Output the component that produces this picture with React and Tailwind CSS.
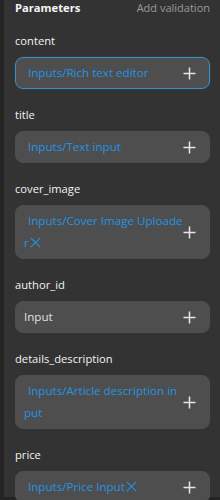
import React from "react";

const Plus = () => (
  <svg width="13" height="13" viewBox="0 0 13 13" className="shrink-0">
    <path d="M6.5 0.5v12M0.5 6.5h12" stroke="#e6e6e6" strokeWidth="1.5" />
  </svg>
);

const Cross = () => (
  <svg width="11" height="11" viewBox="0 0 11 11" className="inline-block align-[-1px] ml-[1px]">
    <path d="M0.8 0.8l9.4 9.4M10.2 0.8l-9.4 9.4" stroke="#2394e4" strokeWidth="1.1" />
  </svg>
);

function Field({ label, lines, plain, focused, cross }) {
  return (
    <div className="flex flex-col gap-[8px]">
      <div className="h-[16px] leading-[16px] text-[11.2px] text-[#f2f2f2]">{label}</div>
      <div
        className={
          "flex items-center rounded-[8px] bg-[#4e4e4e] pl-[8px] pr-[13px] py-[4px] " +
          (focused
            ? "border border-[#2394e4] shadow-[0_0_0_1px_#4a3520]"
            : "border border-[#4e4e4e]")
        }
      >
        <div className={"flex-1 min-w-0 leading-[22px] text-[11.6px] " + (plain ? "text-[#e0e0e0]" : "text-[#2394e4]")}>
          {lines.map((l, i) => (
            <div key={i} className={"whitespace-nowrap " + (!plain && i === 0 ? "pl-[4px]" : "")}>
              {l}
              {cross && i === lines.length - 1 ? <Cross /> : null}
            </div>
          ))}
        </div>
        <Plus />
      </div>
    </div>
  );
}

export default function App() {
  return (
    <div
      className="w-[220px] h-[500px] bg-[#242424] flex overflow-hidden"
      style={{ fontFamily: '"Open Sans", "Noto Sans", sans-serif' }}
    >
      <div className="ml-[4px] w-[216px] h-[497px] bg-[#333333] pl-[11px] pr-[10px] flex flex-col">
        <div className="flex justify-between items-center h-[15px] leading-[15px] text-[11px]">
          <span className="font-bold text-[#f5f5f5] text-[11.2px]">Parameters</span>
          <span className="text-[#9a9a9a]">Add validation</span>
        </div>
        <div className="flex flex-col gap-[18px] mt-[18px]">
          <Field label="content" lines={["Inputs/Rich text editor"]} focused />
          <Field label="title" lines={["Inputs/Text input"]} />
          <Field label="cover_image" lines={["Inputs/Cover Image Uploade", "r"]} cross />
          <Field label="author_id" lines={["Input"]} plain />
          <Field label="details_description" lines={["Inputs/Article description in", "put"]} />
          <Field label="price" lines={["Inputs/Price Input"]} cross />
        </div>
      </div>
    </div>
  );
}
